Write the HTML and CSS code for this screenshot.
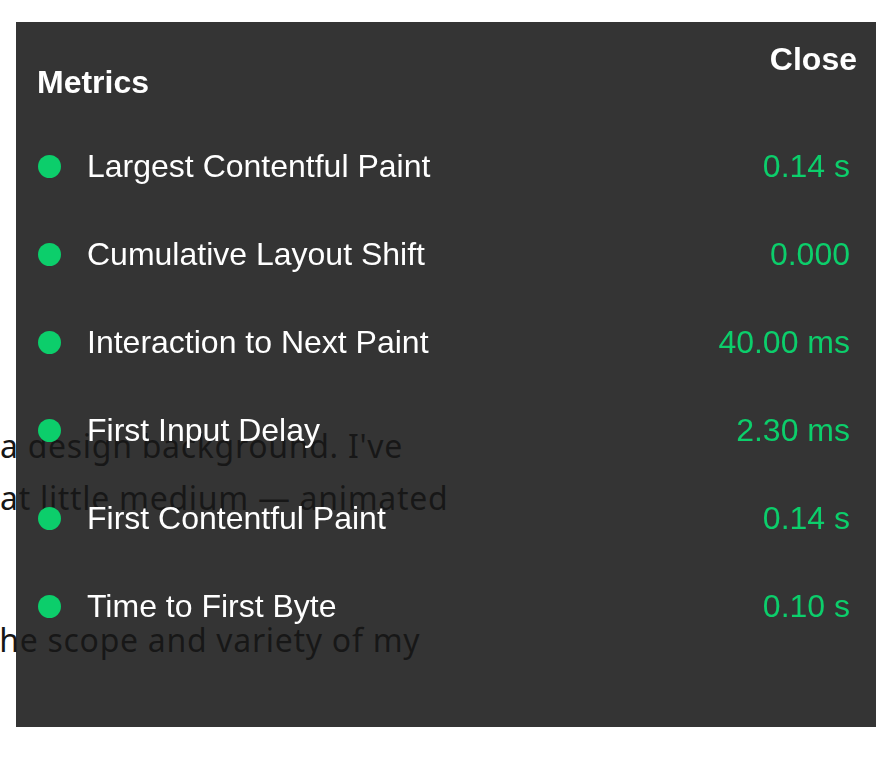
FILE: index.html
```
<!DOCTYPE html>
<html lang="en">
<head>
  <meta charset="UTF-8">
  <title>Metrics overlay</title>
  <link rel="stylesheet" href="styles.css">
</head>
<body>

<div class="page">
  <p class="para">
    <span class="line">a design background. I've</span>
    <span class="line">at little medium — animated</span>
  </p>
  <p class="para">
    <span class="line cut">the scope and variety of my</span>
  </p>
</div>

<div class="metrics" id="metrics">
  <div class="metrics-head">
    <h2>Metrics</h2>
    <button class="close" onclick="document.getElementById('metrics').style.display='none'">Close</button>
  </div>
  <ul class="metric-list">
    <li class="metric"><span class="dot"></span><span class="name">Largest Contentful Paint</span><span class="value">0.14 s</span></li>
    <li class="metric"><span class="dot"></span><span class="name">Cumulative Layout Shift</span><span class="value">0.000</span></li>
    <li class="metric"><span class="dot"></span><span class="name">Interaction to Next Paint</span><span class="value">40.00 ms</span></li>
    <li class="metric"><span class="dot"></span><span class="name">First Input Delay</span><span class="value">2.30 ms</span></li>
    <li class="metric"><span class="dot"></span><span class="name">First Contentful Paint</span><span class="value">0.14 s</span></li>
    <li class="metric"><span class="dot"></span><span class="name">Time to First Byte</span><span class="value">0.10 s</span></li>
  </ul>
</div>

</body>
</html>
```

FILE: styles.css
```
body {
  margin: 0;
  background: #fff;
  overflow: hidden;
}
.page {
  padding-top: 420px;
  font-family: "Noto Sans", sans-serif;
  font-size: 32px;
  letter-spacing: 0.7px;
  line-height: 52px;
  color: #161616;
}
.para {
  margin: 0 0 90px;
}
.line {
  display: block;
  white-space: nowrap;
}
.cut {
  margin-left: -13px;
}

.metrics {
  position: fixed; top: 22px; left: 16px; right: 18px; bottom: 31px;
  background: rgba(24,24,24,0.88);
  padding: 19px;
  font-family: "Liberation Sans", Arial, sans-serif;
  font-size: 32px; line-height: 36px;
  color: #fff;
}
.metrics-head {
  display: flex; justify-content: space-between; align-items: flex-start;
}
.metrics-head h2 {
  margin: 0; padding: 23px 0 0 2px;
  font-size: 32px; font-weight: bold;
}
.close {
  background: none; border: none; padding: 0;
  color: #fff; font: bold 32px/36px "Liberation Sans", Arial, sans-serif;
  cursor: pointer;
}
.metric-list {
  list-style: none; margin: 48px 0 0; padding: 0 7px 0 3px;
  display: flex; flex-direction: column; gap: 52px;
}
.metric {
  display: flex; align-items: center; gap: 26px;
}
.dot {
  width: 23px; height: 23px; border-radius: 50%;
  background: #0cce6b; flex: none;
}
.name { flex: 1; }
.value { color: #0cce6b; }
```
